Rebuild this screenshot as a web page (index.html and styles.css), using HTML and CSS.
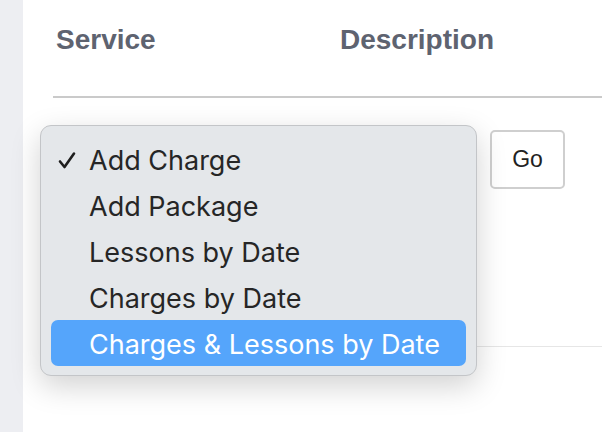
FILE: index.html
```html
<!DOCTYPE html>
<html>
<head>
<meta charset="utf-8">
<link rel="stylesheet" href="styles.css">
</head>
<body>
<div class="page">
  <aside class="sidebar"></aside>
  <main class="main">
    <div class="table">
      <div class="thead">
        <div class="th th-service">Service</div>
        <div class="th">Description</div>
      </div>
      <div class="trow">
        <div class="td td-service"></div>
        <div class="td td-desc"><button class="go">Go</button></div>
      </div>
    </div>
  </main>
  <div class="menu">
    <div class="item checked"><span class="check"><svg width="18" height="18" viewBox="0 0 18 18"><path d="M2 10.5 L6.5 16 L16 2.5" fill="none" stroke="#1e1e1e" stroke-width="2.6" stroke-linecap="round" stroke-linejoin="round"/></svg></span>Add Charge</div>
    <div class="item">Add Package</div>
    <div class="item">Lessons by Date</div>
    <div class="item">Charges by Date</div>
    <div class="item selected">Charges &amp; Lessons by Date</div>
  </div>
</div>
</body>
</html>
```
FILE: styles.css
```css
html, body {
  margin: 0;
  padding: 0;
  background: #ffffff;
}
.page {
  position: relative;
  display: flex;
  width: 602px;
  height: 432px;
  overflow: hidden;
}
.sidebar {
  width: 23px;
  flex: none;
  background: #edeef2;
}
.main {
  flex: 1;
  padding-left: 30px;
}
.thead {
  display: flex;
  height: 96px;
  border-bottom: 2px solid #cacaca;
  box-sizing: content-box;
}
.th {
  font-family: "Liberation Sans", Arial, sans-serif;
  font-weight: bold;
  font-size: 28px;
  line-height: 32px;
  color: #5e6370;
  padding: 24px 0 0 3px;
}
.th-service {
  width: 281px;
}
.trow {
  display: flex;
  height: 248px;
  border-bottom: 1px solid #e6e6e6;
}
.td-service {
  width: 438px;
}
.td-desc {
  padding-top: 32px;
}
.go {
  width: 75px;
  height: 59px;
  box-sizing: border-box;
  margin-left: -1px;
  border: 2px solid #cfcfcf;
  border-radius: 5px;
  background: #ffffff;
  font-family: "Liberation Sans", Arial, sans-serif;
  font-size: 23px;
  color: #222;
  padding: 0;
}
.menu {
  position: absolute;
  left: 40px;
  top: 125px;
  width: 437px;
  height: 251px;
  box-sizing: border-box;
  padding: 10px 10px 9px 10px;
  background: #e4e7ea;
  border: 1px solid #c3c5c8;
  border-radius: 11px;
  box-shadow: 0 10px 30px rgba(0, 0, 0, 0.18);
  font-family: "Inter", "Noto Sans", sans-serif;
  font-size: 27px;
  color: #262626;
}
.item {
  position: relative;
  box-sizing: border-box;
  height: 46px;
  padding-top: 3px;
  line-height: 43px;
  padding-left: 38px;
  border-radius: 7px;
}
.check {
  position: absolute;
  left: 7px;
  top: 15px;
  width: 18px;
  height: 18px;
  line-height: 0;
}
.selected {
  background: #55a5fb;
  color: #ffffff;
}
```
